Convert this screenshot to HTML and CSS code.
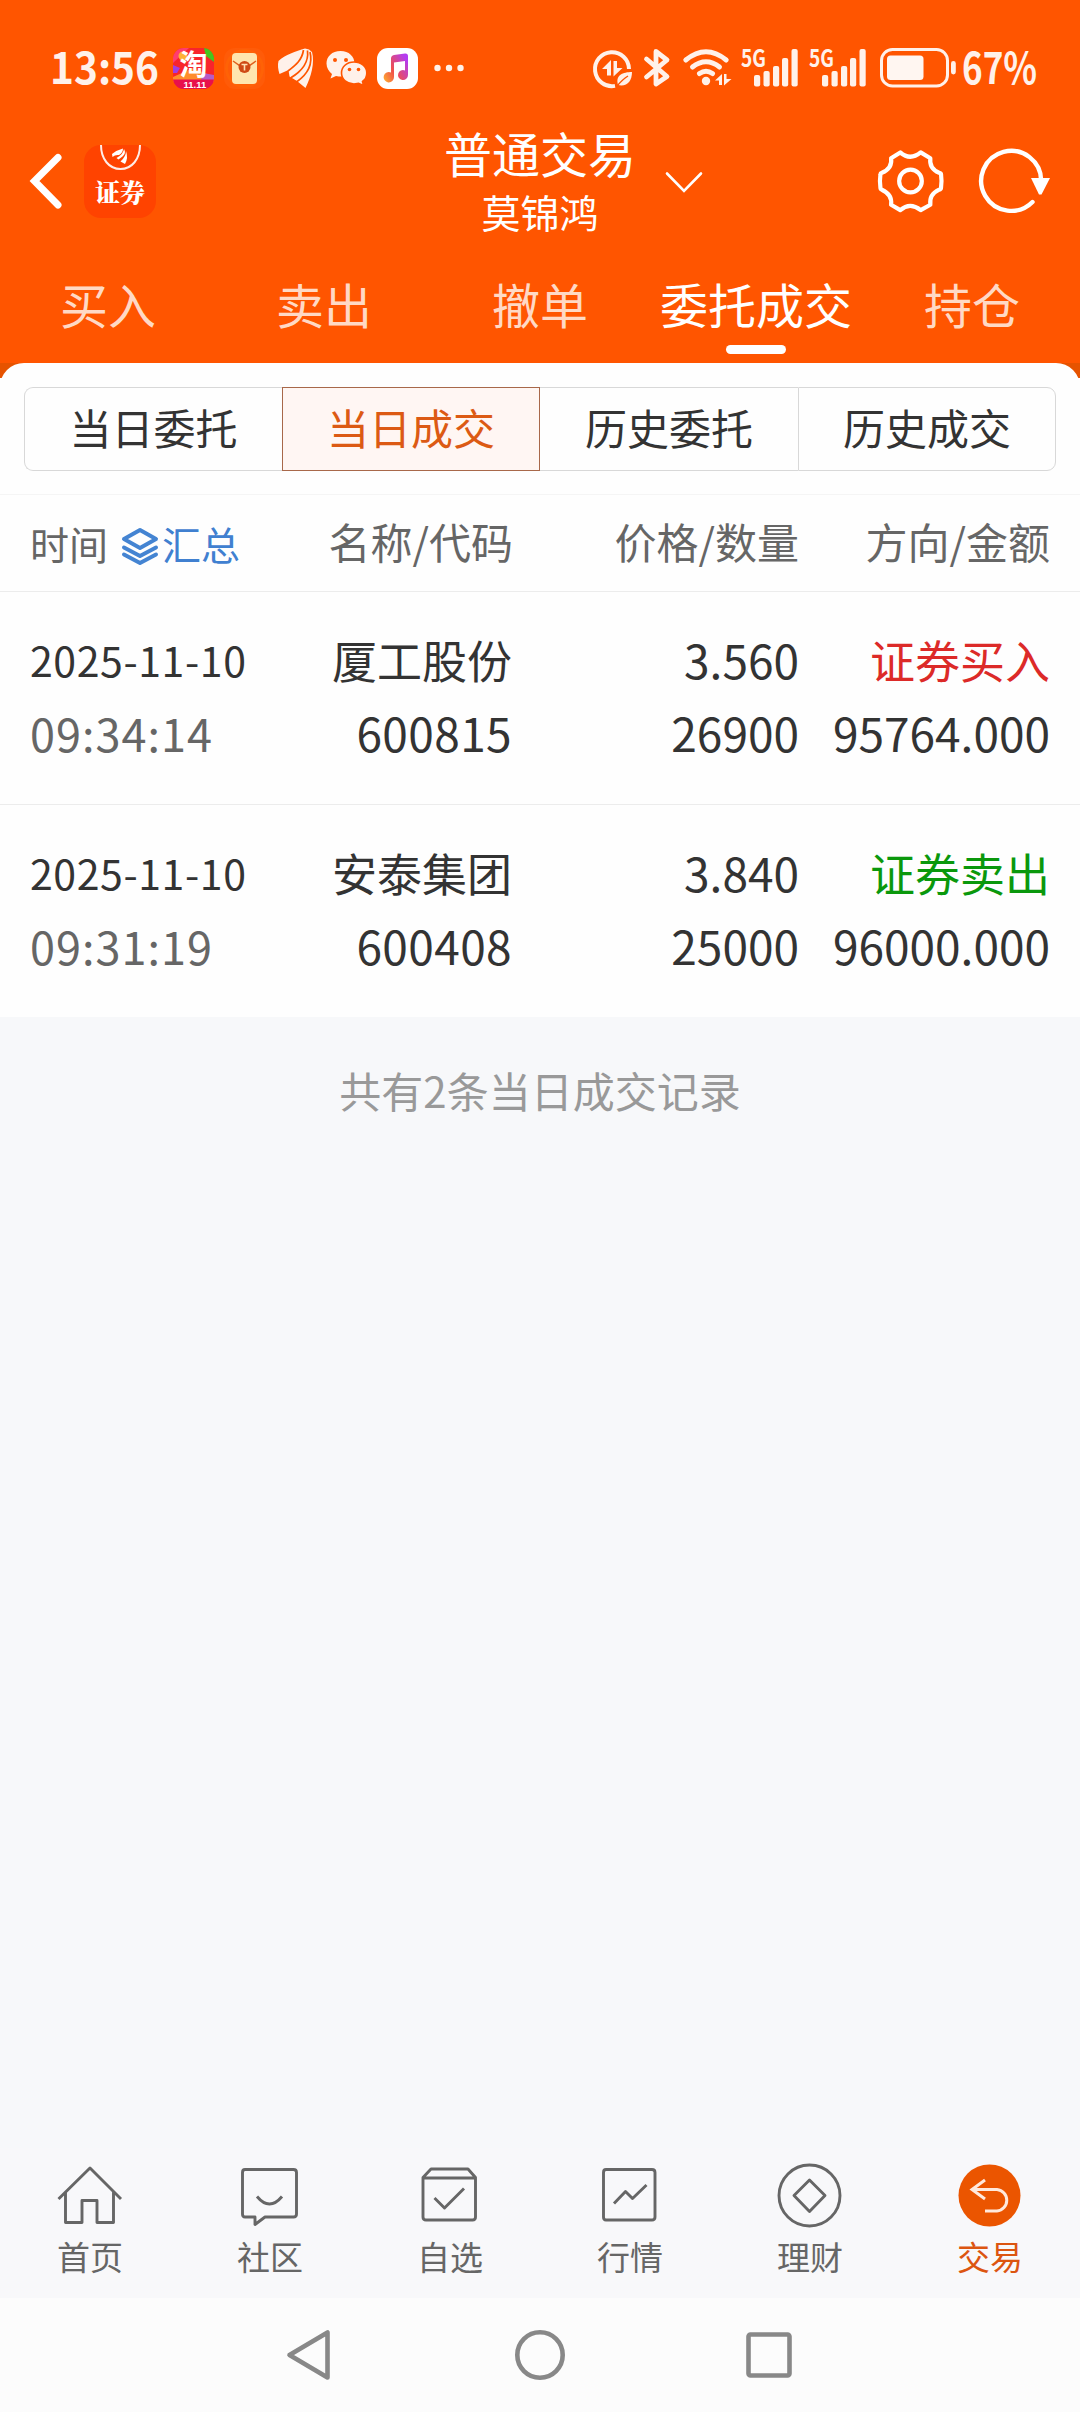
FILE: index.html
```html
<!DOCTYPE html>
<html lang="zh-CN">
<head>
<meta charset="utf-8">
<title>普通交易</title>
<link rel="stylesheet" href="styles.css">
</head>
<body>
<div class="screen">
  <header class="top">
    <div class="status">
      <svg class="clock" width="110" height="64" viewBox="51 36 110 64"><text x="51" y="84" font-size="43.5" textLength="109" lengthAdjust="spacingAndGlyphs">13:56</text></svg>
      <svg class="i-taobao" width="41" height="41" viewBox="0 0 41 41">
        <defs><clipPath id="tb"><rect width="41" height="41" rx="11"/></clipPath></defs>
        <g clip-path="url(#tb)">
          <rect width="41" height="41" fill="#f8242c"/>
          <path d="M0 15 16 0H0Z" fill="#ff3d6e"/><path d="M31 0h10v14l-8-6Z" fill="#45c51e"/>
          <circle cx="10" cy="8" r="4.500" fill="#ffb236"/><path d="M0 17l7 3-3 5H0Z" fill="#a23de0"/>
          <path d="M0 29l20-9 21 9v5H0Z" fill="#ff8d2c"/><path d="M30 25l11 2v5H28Z" fill="#b45cc8"/>
          <rect y="31.500" width="41" height="10" fill="#e8104c"/>
        </g>
        <text x="6.500" y="27" class="tb-word">淘</text><text x="10.500" y="39.500" class="tb-date">11.11</text>
      </svg>
      <svg class="i-letter" width="41" height="41" viewBox="0 0 41 41">
        <rect width="41" height="41" rx="11" fill="#ff5b08"/><circle cx="20.500" cy="20.500" r="18" fill="none" stroke="#ff6206" stroke-width="3"/>
        <rect x="8" y="5" width="25" height="31" rx="4" fill="#ffe6ae"/><path d="M9 13l8 5.500q3.500 2 7 0L32 13" fill="none" stroke="#e0601c" stroke-width="1.500"/>
        <circle cx="20.500" cy="19" r="6" fill="#cf4a14"/><path d="M17.500 16.500h6M20.500 16.500v6" stroke="#ffe0b0" stroke-width="1.600"/>
      </svg>
      <svg class="i-feather" width="36" height="41" viewBox="278 48 36 41">
        <path d="M278.500 61C285 55 296 51 305 48.500L309 49.500L312 52C315 63 311 77 305.500 88L297 81L289.500 76.500L288.500 70L279.500 74C278 69 277.500 65 278.500 61Z" fill="#fff1ea"/>
        <path d="M303.500 50C302 60 296 65 288 71M307.500 50.500C309 63 302 71 290.500 78M310 52C313 64 308 74 296.500 82" fill="none" stroke="#ff5500" stroke-width="1.700"/>
      </svg>
      <svg class="i-wechat" width="41" height="41" viewBox="326 48 41 41">
        <path d="M340.500 51C332 51 326.500 56.500 326.500 63.500C326.500 68 329 71.500 332 74L330.500 78.500L336 76C350 79 354.500 70 354.500 63.500C354.500 56.500 349 51 340.500 51Z" fill="#fff1ea"/>
        <path d="M354 62C346.500 62 341.500 67 341.500 73C341.500 79.500 347 84 354 84L358.500 83.300L363.500 85.500L362.500 81.500C365.500 79.500 366.800 76.500 366.800 73C366.800 67 361.500 62 354 62Z" fill="#fff1ea" stroke="#ff5500" stroke-width="1.600"/>
        <g fill="#ff5500"><circle cx="335" cy="60" r="2"/><circle cx="346" cy="60" r="2"/><circle cx="349.500" cy="69.500" r="1.800"/><circle cx="358.500" cy="69.500" r="1.800"/></g>
      </svg>
      <svg class="i-music" width="41" height="41" viewBox="0 0 41 41">
        <defs><linearGradient id="mg" x1="0" y1="1" x2="1" y2="0.300"><stop offset="0" stop-color="#ffb02e"/><stop offset=".45" stop-color="#f0504c"/><stop offset="1" stop-color="#b43cf0"/></linearGradient></defs>
        <rect width="41" height="41" rx="11" fill="#fff"/>
        <path d="M14 10.500q0-3 3-3.500l11-1.500q3-.300 3 2.500V27a5 5 0 1 1-3-4.500V13l-11 1.500V29a5.200 5.200 0 1 1-3-4.500Z" fill="url(#mg)"/>
      </svg>
      <svg class="i-more" width="30" height="8" viewBox="0 0 30 8" fill="#fff1ea"><circle cx="3.500" cy="4" r="3.200"/><circle cx="15" cy="4" r="3.200"/><circle cx="26.500" cy="4" r="3.200"/></svg>
      <div class="status-right">
        <svg width="40" height="41" viewBox="593 48 40 41">
          <path d="M615 85.900A17 17 0 1 1 629 69" fill="none" stroke="#fff1ea" stroke-width="4"/>
          <path d="M602 69l9-9v15.500h-4V69ZM613.500 61h3.500v7h5.500l-9 8.500Z" fill="#fff1ea"/>
          <path d="M618 85c-3-10 5-13 14-13c0 9-5 15-14 13Z" fill="#fff1ea"/><path d="M617 86q6-7 11-10" stroke="#ff5500" stroke-width="1.400" fill="none"/>
        </svg>
        <svg class="i-bt" width="28" height="41" viewBox="643 48 28 41"><path d="M646.500 59L667 76.500L656 84V51.500L667 60L646.500 77" fill="none" stroke="#fff1ea" stroke-width="4.800" stroke-linecap="round" stroke-linejoin="round"/></svg>
        <svg class="i-wifi" width="48" height="41" viewBox="683 48 48 41" fill="none" stroke="#fff1ea" stroke-width="5" stroke-linecap="round">
          <path d="M685.800 60Q706 43.500 726.200 60M692.500 67Q706 56.500 719.500 67M699.500 73.500Q706 69 712.500 73.500"/><circle cx="706" cy="81" r="4.200" fill="#fff1ea" stroke="none"/>
          <path d="M715 80.500l7-6.500v11h-3v-4.500ZM724 74h2.500v5h5l-7.500 6.500Z" fill="#fff1ea" stroke="none"/>
        </svg>
        <svg class="i-sig" width="58" height="55" viewBox="741 41 58 55" fill="#fff1ea"><text x="741" y="66.500" font-size="23.500" textLength="25" lengthAdjust="spacingAndGlyphs">5G</text><rect x="754" y="75" width="6.200" height="11.500" rx="2"/><rect x="763.500" y="71" width="6.200" height="15.500" rx="2"/><rect x="773" y="66" width="6.200" height="20.500" rx="2"/><rect x="782" y="58" width="6.200" height="28.500" rx="2"/><rect x="791.500" y="49" width="6.200" height="37.500" rx="2"/></svg>
        <svg class="i-sig" width="58" height="55" viewBox="741 41 58 55" fill="#fff1ea"><text x="741" y="66.500" font-size="23.500" textLength="25" lengthAdjust="spacingAndGlyphs">5G</text><rect x="754" y="75" width="6.200" height="11.500" rx="2"/><rect x="763.500" y="71" width="6.200" height="15.500" rx="2"/><rect x="773" y="66" width="6.200" height="20.500" rx="2"/><rect x="782" y="58" width="6.200" height="28.500" rx="2"/><rect x="791.500" y="49" width="6.200" height="37.500" rx="2"/></svg>
        <svg class="i-batt" width="77" height="41" viewBox="880 48 77 41"><rect x="881.500" y="49.500" width="66" height="36.500" rx="11" fill="none" stroke="#fff1ea" stroke-width="3"/><rect x="887" y="55.500" width="36.500" height="24.500" rx="3.500" fill="#fff6f1"/><rect x="951" y="61" width="4.800" height="13.500" rx="2.400" fill="#fff1ea"/></svg>
        <svg class="clock" width="76" height="64" viewBox="962 36 76 64"><text x="962" y="84" font-size="43.500" textLength="75" lengthAdjust="spacingAndGlyphs">67%</text></svg>
      </div>
    </div>
    <div class="titlebar">
      <svg class="back" width="36" height="60" viewBox="28 151 36 60"><path d="M58 157.500L34.500 181L58 205" fill="none" stroke="#fff" stroke-width="7" stroke-linecap="round"/></svg>
      <div class="brand">
        <svg width="44" height="26" viewBox="98 145 44 26"><path d="M101 145C101 159 109 169 120.500 169S140 159 140 145" fill="none" stroke="#ffece6" stroke-width="2"/><path d="M112 154q5-4 11-5.500q0 4-4 6.500q-4-.500-6.500 2ZM124 149q2.500 4-1.500 7.500l-4 3l-2-1.500q7-4 7.500-9ZM126 151q2.500 7-1 13l-4.500-2.500q5.500-5 5.500-10.500Z" fill="#fff"/></svg>
        <span>证券</span>
      </div>
      <div class="title"><h1>普通交易</h1><p>莫锦鸿</p></div>
      <svg class="down" width="40" height="24" viewBox="664 169 40 24"><path d="M667 173.500L684 191L701 173.500" fill="none" stroke="#fff" stroke-width="2.600" stroke-linecap="round"/></svg>
      <svg class="gear" width="66" height="64" viewBox="876 148 68 66" fill="none" stroke="#fff" stroke-width="4.300" stroke-linejoin="round"><path d="M879.500 174Q879.500 173 881 172.500Q892 168 890.500 157.500L900 151.500Q910 160.500 921 151.500L931 157.500Q929.500 168 940 172.500Q942 173 942 174Q943 181 942 188Q942 189.500 940 190Q929.500 195 931 205.500L921 211Q910 202.500 900 211L890.500 205.500Q892 195 881 190Q879.500 189.500 879.500 188Q878.500 181 879.500 174Z"/><circle cx="910.500" cy="181" r="11.700"/></svg>
      <svg class="refresh" width="74" height="66" viewBox="978 148 74 66"><path d="M1032.500 202A30 30 0 1 1 1041.200 181" fill="none" stroke="#fff" stroke-width="4.400" stroke-linecap="round"/><path d="M1031 178H1050L1041.500 194.500H1039Z" fill="#fff"/></svg>
    </div>
    <nav class="tabs"><a>买入</a><a>卖出</a><a>撤单</a><a class="on">委托成交</a><a>持仓</a></nav>
  </header>
  <div class="sheet-wrap">
    <main class="sheet">
      <div class="segs"><span>当日委托</span><span class="on">当日成交</span><span>历史委托</span><span>历史成交</span></div>
      <div class="cols">
        <div class="time-col">时间<svg width="38" height="38" viewBox="120.500 528 38 38" fill="none" stroke="#4484d2" stroke-width="4" stroke-linejoin="round" stroke-linecap="round"><path d="M139.500 531L155.500 540L139.500 549L123.500 540ZM123.500 548.500L139.500 557L155.500 548.500M123.500 555.500L139.500 564L155.500 555.500"/></svg><b>汇总</b></div>
        <div class="name-col">名称/代码</div><div>价格/数量</div><div>方向/金额</div>
      </div>
      <section class="row">
        <div class="when"><p>2025-11-10</p><p>09:34:14</p></div>
        <div class="name"><p>厦工股份</p><p class="num">600815</p></div>
        <div><p class="num">3.560</p><p class="num">26900</p></div>
        <div><p class="buy">证券买入</p><p class="num">95764.000</p></div>
      </section>
      <section class="row">
        <div class="when"><p>2025-11-10</p><p>09:31:19</p></div>
        <div class="name"><p>安泰集团</p><p class="num">600408</p></div>
        <div><p class="num">3.840</p><p class="num">25000</p></div>
        <div><p class="sell">证券卖出</p><p class="num">96000.000</p></div>
      </section>
    </main>
  </div>
  <p class="summary">共有2条当日成交记录</p>
  <nav class="bottom">
    <a><svg width="72" height="68" viewBox="54 2162 72 68"><path d="M58.500 2199L90 2168L121 2199M65.500 2192V2222.500H82V2200.500H97V2222.500H113.500V2192"/></svg>首页</a>
    <a><svg width="72" height="68" viewBox="234 2162 72 68"><path d="M245 2169.500H293.500Q296.500 2169.500 296.500 2172.500V2214Q296.500 2217 293.500 2217H265L255 2224.500V2217H245Q242.500 2217 242.500 2214V2172.500Q242.500 2169.500 245 2169.500ZM257 2196.500Q269.500 2211.500 282 2196.500"/></svg>社区</a>
    <a><svg width="72" height="68" viewBox="414 2162 72 68"><path d="M423 2177.500V2217Q423 2220 426 2220H472.500Q475.500 2220 475.500 2217V2177.500L468 2169H431ZM423 2178H475.500M434.500 2198L444.500 2208L464 2188.500"/></svg>自选</a>
    <a><svg width="72" height="68" viewBox="594 2162 72 68"><path d="M606 2169.500H652Q655 2169.500 655 2172.500V2217Q655 2220 652 2220H606Q603.500 2220 603.500 2217V2172.500Q603.500 2169.500 606 2169.500ZM614 2203.500L625.500 2191.500L632.500 2198.500L646.500 2185"/></svg>行情</a>
    <a><svg width="72" height="68" viewBox="774 2162 72 68"><circle cx="809.500" cy="2195.500" r="30.500"/><path d="M809.500 2180L825 2195.500L809.500 2211.500L794 2195.500Z"/></svg>理财</a>
    <a class="on"><svg width="72" height="68" viewBox="954 2162 72 68"><circle class="disc" cx="989.500" cy="2195.500" r="31"/><path class="arrow" d="M985 2180L972 2189.500L985 2199M972 2189.500H997A10.800 10.800 0 0 1 997 2211H985"/></svg>交易</a>
  </nav>
  <footer class="sysbar">
    <svg width="48" height="54" viewBox="285 2328 48 54"><path d="M327.500 2332.500V2377.500L289.500 2355Z"/></svg>
    <svg width="54" height="54" viewBox="513 2328 54 54"><circle cx="540" cy="2355" r="22.700"/></svg>
    <svg width="48" height="54" viewBox="747 2328 48 54"><rect x="748.500" y="2334.500" width="41" height="41" rx="2"/></svg>
  </footer>
</div>
</body>
</html>
```
FILE: styles.css
```css
* { box-sizing: border-box; margin: 0; padding: 0; }
body { background: #f7f8fa; font-family: "Noto Sans CJK SC", sans-serif; color: #333; }
svg { display: block; flex: none; overflow: visible; }
.screen { width: 1080px; height: 2412px; display: flex; flex-direction: column; overflow: hidden; }

.top { height: 363px; background: #ff5500; color: #fff; display: flex; flex-direction: column; flex: none; }
.status { height: 110px; padding: 26px 42px 0 50px; display: flex; align-items: center; }
.status svg text { font-family: "Noto Sans CJK SC", sans-serif; font-weight: 700; fill: #fff1ea; }
.status svg .tb-word { font-size: 28px; font-weight: 700; fill: #fff; }
.status svg .tb-date { font-family: "Liberation Sans", sans-serif; font-size: 9.5px; font-weight: 700; fill: #fff; }
.i-taobao { margin-left: 13px; }
.i-letter { margin-left: 10px; }
.i-feather { margin-left: 13px; }
.i-wechat { margin-left: 12px; }
.i-music { margin-left: 10px; }
.i-more { margin-left: 16px; }
.status-right { margin-left: auto; display: flex; align-items: center; }
.i-bt { margin-left: 10px; }
.i-wifi { margin-left: 12px; }
.i-sig { margin-left: 10px; }
.i-batt { margin-left: 13px; }
.status-right .clock { margin-left: 5px; }

.titlebar { height: 142px; padding: 0 28px; display: flex; align-items: center; }
.brand { width: 72px; height: 73px; margin-left: 20px; border-radius: 17px; background: #ff4300; display: flex; flex-direction: column; align-items: center; }
.brand span { font-family: "Noto Serif CJK SC", "Noto Sans CJK SC", serif; font-size: 25px; font-weight: 900; line-height: 36px; margin-top: 2px; }
.title { width: 210px; margin-left: 279px; text-align: center; }
.title h1 { font-size: 48px; font-weight: 400; line-height: 61px; margin-top: -2px; }
.title p { font-size: 39px; line-height: 56px; }
.down { margin-left: 19px; }
.gear { margin-left: 173px; }
.refresh { margin-left: 35px; }

.tabs { flex: 1; display: grid; grid-template-columns: repeat(5, 1fr); text-align: center; font-size: 48px; line-height: 70px; color: #ffd9c5; padding-top: 16px; }
.tabs a { display: flex; flex-direction: column; align-items: center; }
.tabs .on { color: #fff; }
.tabs .on::after { content: ""; width: 60px; height: 9px; border-radius: 4.5px; background: #fff; margin-top: 7px; }

.sheet-wrap { background: linear-gradient(#e65300 15px, #fefefe 15px); flex: none; }
.sheet { background: #fefefe; border-radius: 24px 24px 0 0; padding-top: 24px; height: 654px; }
.segs { display: grid; grid-template-columns: repeat(4, 1fr); margin: 0 24px; height: 84px; }
.segs span { border: 1px solid #d8d8d8; display: flex; align-items: center; justify-content: center; font-size: 42px; line-height: 60px; padding-bottom: 5px; }
.segs span:first-child { border-radius: 9px 0 0 9px; border-right: 0; }
.segs span:nth-child(3) { border-left: 0; border-right: 0; }
.segs span:last-child { border-radius: 0 9px 9px 0; }
.segs .on { background: #fff6f3; border-color: #a8684a; color: #dc5a14; }

.cols, .row { display: grid; grid-template-columns: 255px 227px 287px 251px; padding: 0 30px; text-align: right; }
.cols { height: 98px; margin-top: 23px; border-top: 1px solid #f5f5f5; border-bottom: 1px solid #ececec; align-items: center; color: #666; font-size: 42px; line-height: 60px; padding-bottom: 5px; }
.name-col { padding-right: 0; margin-right: -1px; }
.time-col { display: flex; align-items: center; font-size: 39px; text-align: left; padding-top: 4px; }
.time-col svg { margin: 7px 3px 0 13px; }
.time-col b { font-weight: 400; color: #4080d0; }
.row { height: 213px; padding-top: 31px; border-bottom: 1px solid #ececec; font-size: 45px; line-height: 73px; }
.row:last-child { border-bottom: 0; }
.when { text-align: left; font-size: 41px; letter-spacing: .6px; }
.when p + p { color: #666; font-size: 45px; letter-spacing: 1px; }
.num { font-size: 46px; }
.name .num { letter-spacing: .4px; }
.buy { color: #dc2a28; }
.sell { color: #0a980c; }
.summary { text-align: center; font-size: 42px; line-height: 60px; color: #999; padding-top: 43px; }

.bottom { margin-top: auto; height: 150px; padding-top: 14px; background: #f8f8fa; display: grid; grid-template-columns: repeat(6, 1fr); flex: none; }
.bottom a { display: flex; flex-direction: column; align-items: center; color: #666; font-size: 33px; line-height: 48px; gap: 2px; }
.bottom svg { fill: none; stroke: #666; stroke-width: 2.9; stroke-linejoin: round; }
.bottom .on { color: #dc5510; }
.bottom .disc { fill: #eb5500; stroke: none; }
.bottom .arrow { stroke: #ffe9dc; stroke-width: 3; stroke-linejoin: miter; }
.sysbar { height: 114px; background: #fcfcfc; display: flex; justify-content: center; align-items: center; gap: 180px; flex: none; }
.sysbar svg { fill: none; stroke: #888; stroke-width: 4.6; stroke-linejoin: round; }
```
